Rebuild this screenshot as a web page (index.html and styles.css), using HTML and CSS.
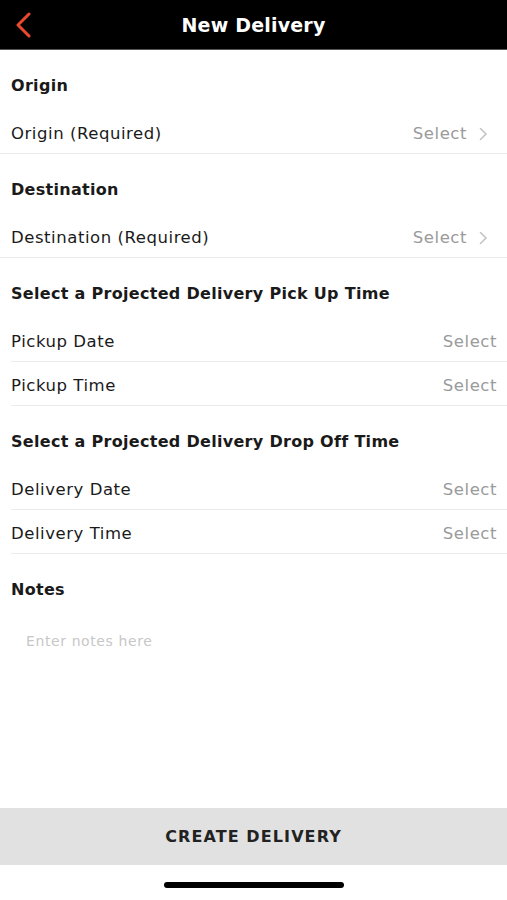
FILE: index.html
```html
<!DOCTYPE html>
<html>
<head>
  <meta charset="utf-8">
  <meta name="viewport" content="width=device-width, initial-scale=1">
  <title>New Delivery</title>
  <link rel="stylesheet" href="styles.css">
</head>
<body>
  <div class="app">
    <!-- Barra superior -->
    <header class="topbar">
      <span class="back">
        <svg width="20" height="26" viewBox="0 0 20 26">
          <path d="M16 2 L5 13 L16 24" fill="none" stroke="#e8492f" stroke-width="3" stroke-linecap="round" stroke-linejoin="round"/>
        </svg>
      </span>
      <h1>New Delivery</h1>
    </header>

    <main class="form">
      <div class="section">Origin</div>
      <div class="row full">
        <span>Origin (Required)</span>
        <span class="value">Select
          <svg class="chev" width="9" height="14" viewBox="0 0 9 14"><path d="M1.5 1.5 L7 7 L1.5 12.5" fill="none" stroke="#c4c4c4" stroke-width="1.6" stroke-linecap="round"/></svg>
        </span>
      </div>

      <div class="section">Destination</div>
      <div class="row full">
        <span>Destination (Required)</span>
        <span class="value">Select
          <svg class="chev" width="9" height="14" viewBox="0 0 9 14"><path d="M1.5 1.5 L7 7 L1.5 12.5" fill="none" stroke="#c4c4c4" stroke-width="1.6" stroke-linecap="round"/></svg>
        </span>
      </div>

      <div class="section">Select a Projected Delivery Pick Up Time</div>
      <div class="row">
        <span>Pickup Date</span>
        <span class="value">Select</span>
      </div>
      <div class="row">
        <span>Pickup Time</span>
        <span class="value">Select</span>
      </div>

      <div class="section">Select a Projected Delivery Drop Off Time</div>
      <div class="row">
        <span>Delivery Date</span>
        <span class="value">Select</span>
      </div>
      <div class="row">
        <span>Delivery Time</span>
        <span class="value">Select</span>
      </div>

      <div class="section">Notes</div>
      <textarea class="notes" placeholder="Enter notes here"></textarea>
    </main>

    <button class="create">CREATE DELIVERY</button>
    <div class="home"><span></span></div>
  </div>
</body>
</html>
```

FILE: styles.css
```css
* {
  box-sizing: border-box;
}

body {
  margin: 0;
  font-family: "DejaVu Sans", "Open Sans", sans-serif;
  color: #1a1a1a;
  background: #fff;
}

.app {
  height: 900px;
  display: flex;
  flex-direction: column;
}

.topbar {
  height: 50px;
  background: #000;
  border-bottom: 1px solid #555;
  display: flex;
  align-items: center;
  justify-content: center;
  position: relative;
}

.topbar h1 {
  margin: 0;
  color: #fff;
  font-size: 19px;
  font-weight: 700;
  letter-spacing: 0.2px;
}

.back {
  position: absolute;
  left: 13px;
  top: 12px;
}

.form {
  flex: 1;
  display: flex;
  flex-direction: column;
}

.section {
  height: 60px;
  padding: 26px 11px 0;
  font-size: 16px;
  font-weight: 700;
  letter-spacing: 0.3px;
}

.row {
  height: 44px;
  margin-left: 11px;
  padding-top: 4px;
  padding-right: 10px;
  display: flex;
  align-items: center;
  justify-content: space-between;
  font-size: 16.5px;
  letter-spacing: 0.55px;
  border-bottom: 1px solid #ececec;
}

.row.full {
  margin-left: 0;
  padding-left: 11px;
  padding-right: 19px;
}

.value {
  color: #9a9a9a;
  display: flex;
  align-items: center;
}

.chev {
  margin-left: 12px;
}

.notes {
  border: none;
  resize: none;
  outline: none;
  margin: 0 0 0 26px;
  padding: 19px 0 0;
  height: 120px;
  font-family: inherit;
  font-size: 14px;
  letter-spacing: 0.6px;
}

.notes::placeholder {
  color: #c7c7c7;
}

.create {
  height: 57px;
  border: none;
  background: #e1e1e1;
  color: #222;
  font-family: inherit;
  font-size: 16px;
  font-weight: 700;
  letter-spacing: 1.1px;
}

.home {
  height: 35px;
  padding-top: 5px;
  display: flex;
  justify-content: center;
  align-items: center;
}

.home span {
  width: 180px;
  height: 6px;
  border-radius: 3px;
  background: #000;
}
```
